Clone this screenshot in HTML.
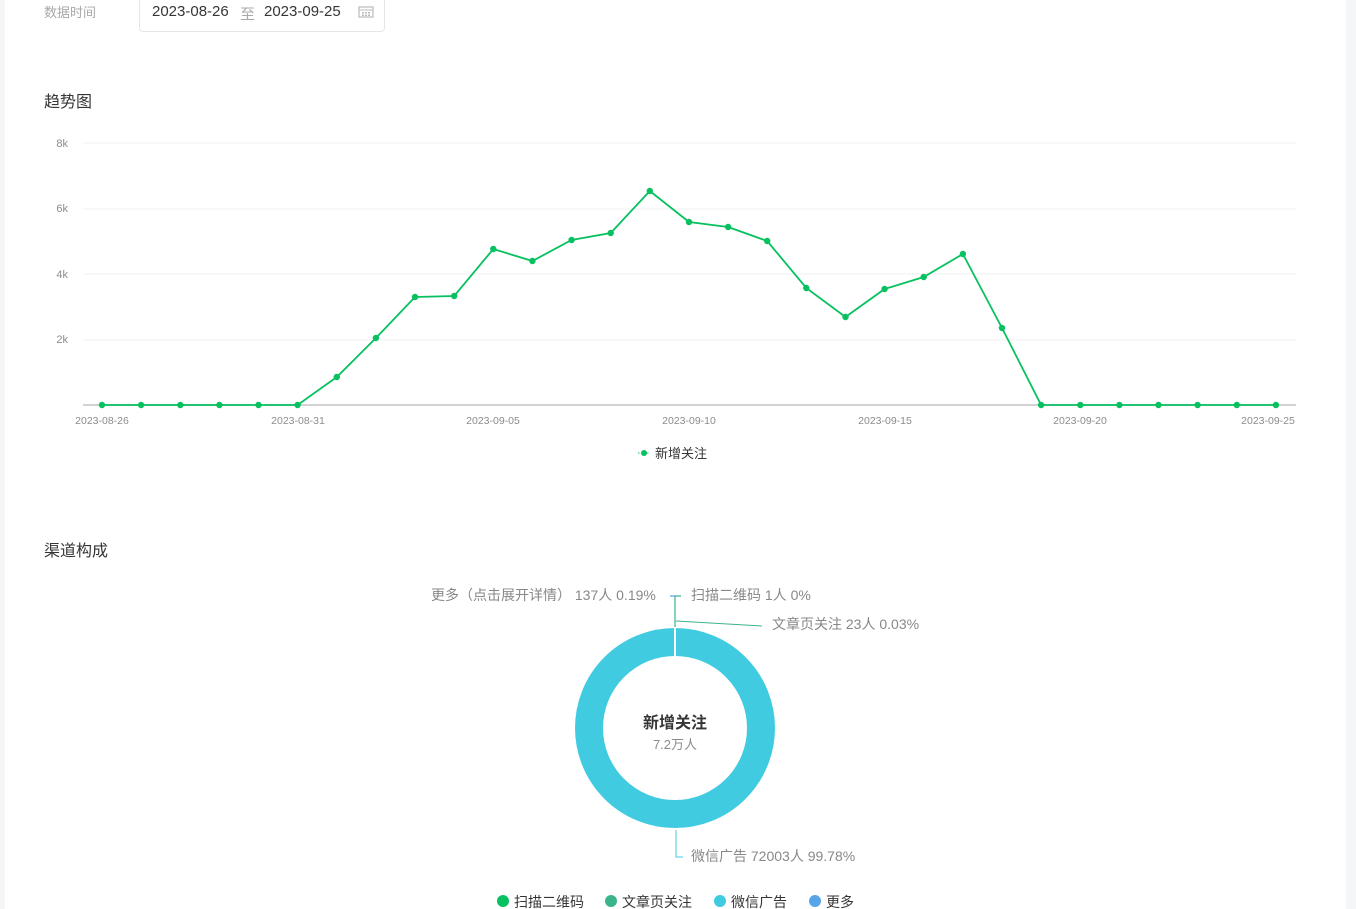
<!DOCTYPE html>
<html><head><meta charset="utf-8"><style>
html,body{margin:0;padding:0}
body{width:1356px;height:909px;overflow:hidden;background:#f5f6f7;font-family:"Liberation Sans","Noto Sans CJK SC",sans-serif;position:relative}
.panel{position:absolute;left:5px;top:0;width:1341px;height:909px;background:#fff}
.t{position:absolute;white-space:nowrap}
</style></head><body>
<div class="panel"></div>
<div class="t" style="left:44px;top:2px;font-size:13px;color:#a8a8a8">数据时间</div>
<div style="position:absolute;left:139px;top:-6px;width:244px;height:36px;border:1px solid #e4e6e9;border-radius:4px;background:#fff"></div>
<div class="t" style="left:152px;top:3px;font-size:15px;color:#353535">2023-08-26</div>
<div class="t" style="left:240px;top:3px;font-size:15px;color:#a8a8a8">至</div>
<div class="t" style="left:264px;top:3px;font-size:15px;color:#353535">2023-09-25</div>
<svg style="position:absolute;left:358px;top:5px" width="16" height="14"><rect x="1" y="2" width="14" height="10" fill="none" stroke="#bbb" stroke-width="1.2"/><line x1="1" y1="5" x2="15" y2="5" stroke="#bbb"/><g fill="#bbb"><rect x="4" y="7" width="2" height="1.5"/><rect x="7" y="7" width="2" height="1.5"/><rect x="10" y="7" width="2" height="1.5"/><rect x="4" y="9.5" width="2" height="1.5"/><rect x="7" y="9.5" width="2" height="1.5"/><rect x="10" y="9.5" width="2" height="1.5"/></g></svg>
<div class="t" style="left:44px;top:88px;font-size:16px;color:#353535">趋势图</div>
<div class="t" style="left:44px;top:537px;font-size:16px;color:#353535">渠道构成</div>
<svg style="position:absolute;left:0;top:0" width="1356" height="909" font-family="Liberation Sans, Noto Sans CJK SC, sans-serif">
<g stroke="#f0f0f0" stroke-width="1"><line x1="83" y1="143" x2="1296" y2="143"/><line x1="83" y1="209" x2="1296" y2="209"/><line x1="83" y1="274" x2="1296" y2="274"/><line x1="83" y1="340" x2="1296" y2="340"/></g>
<line x1="83" y1="405" x2="1296" y2="405" stroke="#c4c4c4" stroke-width="1.5"/>
<g font-size="11" fill="#8c8c8c" text-anchor="end"><text x="68" y="147">8k</text><text x="68" y="212">6k</text><text x="68" y="278">4k</text><text x="68" y="343">2k</text></g>
<g font-size="10.5" fill="#8c8c8c" text-anchor="middle"><text x="102" y="424">2023-08-26</text><text x="298" y="424">2023-08-31</text><text x="493" y="424">2023-09-05</text><text x="689" y="424">2023-09-10</text><text x="885" y="424">2023-09-15</text><text x="1080" y="424">2023-09-20</text><text x="1268" y="424">2023-09-25</text></g>
<polyline id="pl" fill="none" stroke="#07c160" stroke-width="1.8" points=""/>
<g id="dots" fill="#07c160"></g>
<circle cx="644" cy="453" r="3" fill="#07c160"/><line x1="638" y1="453" x2="650" y2="453" stroke="#07c160" stroke-dasharray="1.5 1.5"/>
<text x="655" y="458" font-size="13" fill="#353535">新增关注</text>
<circle cx="675" cy="728" r="86" fill="none" stroke="#40cbe0" stroke-width="28"/>
<line x1="675" y1="627" x2="675" y2="658" stroke="#fff" stroke-width="2"/>
<text x="675" y="728" font-size="16" font-weight="bold" fill="#353535" text-anchor="middle">新增关注</text>
<text x="675" y="749" font-size="13" fill="#8c8c8c" text-anchor="middle">7.2万人</text>
<polyline points="675,627 675,596 681,596" fill="none" stroke="#3bb48c" stroke-width="1.2"/>
<polyline points="675,596 670,596" fill="none" stroke="#58a4e8" stroke-width="1.2"/>
<polyline points="676,621 762,626" fill="none" stroke="#3bb48c" stroke-width="1"/>
<polyline points="676,830 676,857 683,857" fill="none" stroke="#40cbe0" stroke-width="1"/>
<g font-size="14" fill="#888"><text x="431" y="600">更多（点击展开详情） 137人 0.19%</text><text x="691" y="600">扫描二维码 1人 0%</text><text x="772" y="629">文章页关注 23人 0.03%</text><text x="691" y="861">微信广告 72003人 99.78%</text></g>
<g font-size="14" fill="#353535"><circle cx="503" cy="901" r="6" fill="#07c160"/><text x="514" y="907">扫描二维码</text><circle cx="611" cy="901" r="6" fill="#3bb48c"/><text x="622" y="907">文章页关注</text><circle cx="720" cy="901" r="6" fill="#40cbe0"/><text x="731" y="907">微信广告</text><circle cx="815" cy="901" r="6" fill="#58a4e8"/><text x="826" y="907">更多</text></g>
</svg>
<script>
var ys=[405,405,405,405,405,405,377,338,297,296,249,261,240,233,191,222,227,241,288,317,289,277,254,328,405,405,405,405,405,405,405];
var p=[],d='';ys.forEach(function(y,i){var x=102+i*39.13;p.push(x.toFixed(1)+','+y);d+='<circle cx="'+x.toFixed(1)+'" cy="'+y+'" r="3.2"/>';});
document.getElementById('pl').setAttribute('points',p.join(' '));document.getElementById('dots').innerHTML=d;
</script>
</body></html>
